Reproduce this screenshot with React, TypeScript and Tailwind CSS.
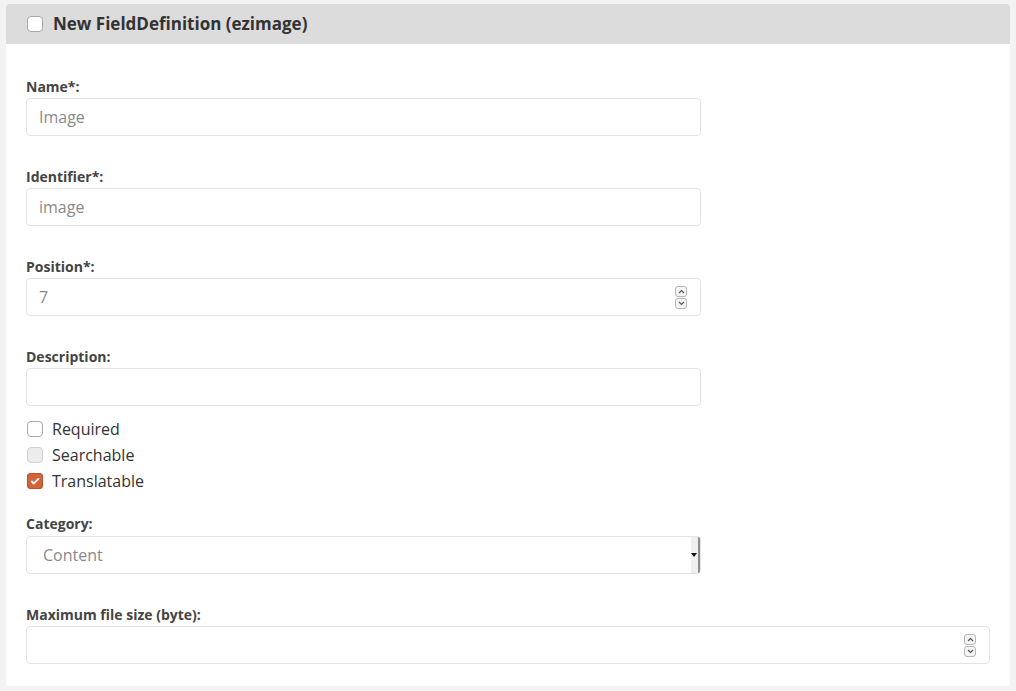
import React from 'react';

const font = { fontFamily: '"Open Sans", "Noto Sans", "Liberation Sans", sans-serif' };

function Spinner() {
  return (
    <div className="flex flex-col gap-px">
      <div className="w-3 h-[11px] rounded-[3px] border border-[#b5b5b5] bg-[#f4f4f4] flex items-center justify-center">
        <svg width="7" height="5" viewBox="0 0 7 5"><path d="M1 4 L3.5 1.5 L6 4" fill="none" stroke="#555" strokeWidth="1.2" /></svg>
      </div>
      <div className="w-3 h-[11px] rounded-[3px] border border-[#b5b5b5] bg-[#f4f4f4] flex items-center justify-center">
        <svg width="7" height="5" viewBox="0 0 7 5"><path d="M1 1 L3.5 3.5 L6 1" fill="none" stroke="#555" strokeWidth="1.2" /></svg>
      </div>
    </div>
  );
}

function Label({ children, mb = 'mb-0.5' }: { children: React.ReactNode; mb?: string }) {
  return <div className={`text-[14px] leading-[18px] font-bold text-[#444] ${mb}`}>{children}</div>;
}

function Field({ label, value, spinner, wide }: { label: string; value?: string; spinner?: boolean; wide?: boolean }) {
  return (
    <div className="mb-8">
      <Label>{label}</Label>
      <div className={`${wide ? 'w-[964px]' : 'w-[675px]'} h-[38px] border border-[#e3e3e3] rounded-[4px] bg-white flex items-center pl-3 pr-[13px]`}>
        <span className="flex-1 text-base text-[#8a8a8a]">{value}</span>
        {spinner && <Spinner />}
      </div>
    </div>
  );
}

function Check({ label, state }: { label: string; state: 'off' | 'disabled' | 'on' }) {
  return (
    <div className="h-[26px] flex items-center gap-[9px] pl-px">
      {state === 'on' ? (
        <div className="w-4 h-4 rounded-[3px] bg-[#d2643a] border border-[#b8532c] flex items-center justify-center">
          <svg width="10" height="8" viewBox="0 0 10 8"><path d="M1.2 4 L3.8 6.5 L8.8 1.3" fill="none" stroke="#fff" strokeWidth="1.8" /></svg>
        </div>
      ) : (
        <div className={`w-4 h-4 rounded-[4px] border ${state === 'disabled' ? 'border-[#d0d0d0] bg-[#ececec]' : 'border-[#a9a9a9] bg-white'}`} />
      )}
      <span className="text-base text-[#333]">{label}</span>
    </div>
  );
}

export default function App() {
  return (
    <div className="min-h-screen bg-[#f3f3f3] pt-1 px-1.5" style={font}>
      <div className="w-[1004px] h-[682px] bg-white rounded-[4px] overflow-hidden">
        <div className="h-10 bg-[#dcdcdc] flex items-center pl-[21px] gap-[10px]">
          <div className="w-4 h-4 rounded-[4px] border border-[#a9a9a9] bg-white" />
          <span className="text-[17px] font-bold text-[#333]">New FieldDefinition (ezimage)</span>
        </div>
        <div className="px-5 pt-[34px]">
          <Field label="Name*:" value="Image" />
          <Field label="Identifier*:" value="image" />
          <Field label="Position*:" value="7" spinner />
          <div className="mb-2.5">
            <Label>Description:</Label>
            <div className="w-[675px] h-[38px] border border-[#e3e3e3] rounded-[4px] bg-white" />
          </div>
          <Check label="Required" state="off" />
          <Check label="Searchable" state="disabled" />
          <Check label="Translatable" state="on" />
          <div className="mt-[21px] mb-8">
            <Label mb="mb-[3px]">Category:</Label>
            <div className="w-[675px] h-[38px] border border-[#e3e3e3] rounded-[4px] bg-white flex items-stretch">
              <span className="flex-1 flex items-center pl-4 text-base text-[#8a8a8a]">Content</span>
              <div className="w-[9px] bg-[#efefef] border-r-2 border-[#8c8c8c] flex items-center justify-start rounded-r-[2px]">
                <svg width="6" height="4" viewBox="0 0 6 4"><path d="M0 0 H6 L3 4 Z" fill="#111" /></svg>
              </div>
            </div>
          </div>
          <Field label="Maximum file size (byte):" spinner wide />
        </div>
      </div>
    </div>
  );
}
